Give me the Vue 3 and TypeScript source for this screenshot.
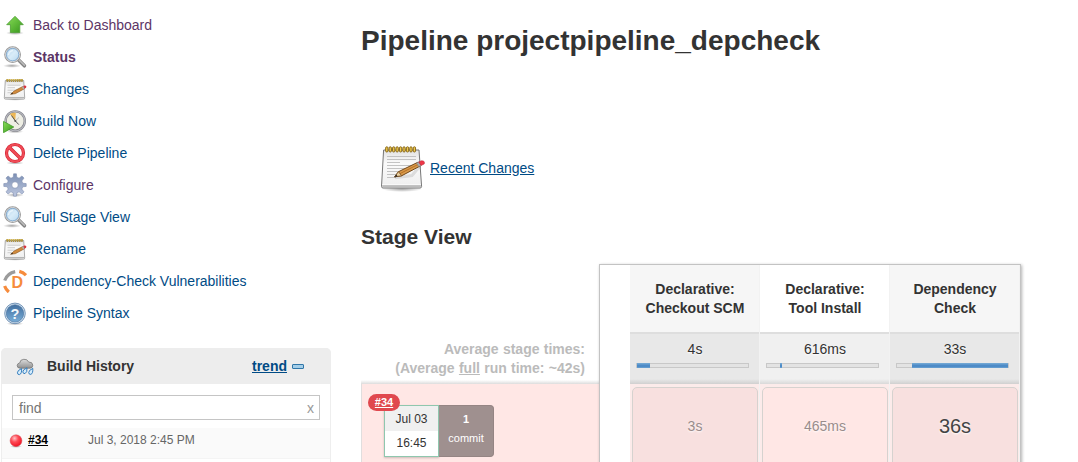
<script setup lang="ts">
interface Task {
  label: string
  icon: string
  visited?: boolean
  current?: boolean
}

interface Stage {
  name: string[]
  average: string
  offset: number
  share: number
  duration: string
  failed?: boolean
}

const tasks: Task[] = [
  { label: 'Back to Dashboard', icon: 'up', visited: true },
  { label: 'Status', icon: 'search', visited: true, current: true },
  { label: 'Changes', icon: 'notepad' },
  { label: 'Build Now', icon: 'clock' },
  { label: 'Delete Pipeline', icon: 'forbidden' },
  { label: 'Configure', icon: 'gear', visited: true },
  { label: 'Full Stage View', icon: 'search' },
  { label: 'Rename', icon: 'notepad' },
  { label: 'Dependency-Check Vulnerabilities', icon: 'depcheck' },
  { label: 'Pipeline Syntax', icon: 'help' },
]

const stages: Stage[] = [
  { name: ['Declarative:', 'Checkout SCM'], average: '4s', offset: 0, share: 11.5, duration: '3s' },
  { name: ['Declarative:', 'Tool Install'], average: '616ms', offset: 11.5, share: 1.8, duration: '465ms' },
  { name: ['Dependency', 'Check'], average: '33s', offset: 13.3, share: 86.7, duration: '36s', failed: true },
]
</script>

<template>
  <div class="page">
    <svg class="defs" width="0" height="0" aria-hidden="true">
      <defs>
        <linearGradient id="g-green" x1="0" y1="0" x2="1" y2="1">
          <stop offset="0" stop-color="#8ade58" /><stop offset="1" stop-color="#36961c" />
        </linearGradient>
        <linearGradient id="g-lens" x1="0" y1="0" x2="1" y2="1">
          <stop offset="0" stop-color="#a9cdea" /><stop offset=".5" stop-color="#d9ecf8" /><stop offset="1" stop-color="#b2d5ee" />
        </linearGradient>
        <linearGradient id="g-paper" x1="0" y1="0" x2="0" y2="1">
          <stop offset="0" stop-color="#e2e2e2" /><stop offset=".35" stop-color="#fafafa" /><stop offset="1" stop-color="#eeeeee" />
        </linearGradient>
        <linearGradient id="g-gear" x1="0" y1="0" x2="0" y2="1">
          <stop offset="0" stop-color="#7c90b4" /><stop offset="1" stop-color="#bdc7df" />
        </linearGradient>
        <linearGradient id="g-help" x1="0" y1="0" x2="0" y2="1">
          <stop offset="0" stop-color="#426f9f" /><stop offset="1" stop-color="#79add7" />
        </linearGradient>
        <linearGradient id="g-cloud" x1="0" y1="0" x2="0" y2="1">
          <stop offset="0" stop-color="#dedede" /><stop offset="1" stop-color="#8f8f8f" />
        </linearGradient>
        <radialGradient id="g-ball" cx=".38" cy=".3" r=".7">
          <stop offset="0" stop-color="#ffc3c6" /><stop offset=".45" stop-color="#ff4b56" /><stop offset="1" stop-color="#ef1525" />
        </radialGradient>
        <radialGradient id="g-shadow">
          <stop offset="0" stop-color="#000" stop-opacity=".35" /><stop offset="1" stop-color="#000" stop-opacity="0" />
        </radialGradient>
      </defs>
      <symbol id="up" viewBox="0 0 24 24">
        <ellipse cx="12" cy="20" rx="9" ry="2" fill="url(#g-shadow)" />
        <path d="M12 3.3 L20.3 11.7 H16.8 V19.6 H7.4 V11.7 H3.7 Z" fill="url(#g-green)" stroke="#4a9c30" stroke-width=".8" stroke-linejoin="round" />
      </symbol>
      <symbol id="search" viewBox="0 0 24 24">
        <ellipse cx="9" cy="20.8" rx="9" ry="2" fill="url(#g-shadow)" />
        <path d="M15.6 15 L21.4 20.8" stroke="#858585" stroke-width="3.6" stroke-linecap="round" />
        <path d="M16 14.9 L21.4 20.3" stroke="#bdbdbd" stroke-width="1.5" stroke-linecap="round" />
        <circle cx="9.6" cy="9.6" r="7.4" fill="url(#g-lens)" stroke="#999" stroke-width="2" />
        <circle cx="9.6" cy="9.6" r="7" fill="none" stroke="#e7e7e7" stroke-width=".9" />
        <circle cx="9.6" cy="9.6" r="6.2" fill="none" stroke="#78a5cf" stroke-width=".8" />
        <path d="M5.5 10 Q6 6 10 5.5" fill="none" stroke="#e8f4fb" stroke-width="1.3" />
      </symbol>
      <symbol id="notepad" viewBox="0 0 24 24">
        <ellipse cx="12" cy="22.4" rx="11" ry="1.3" fill="url(#g-shadow)" />
        <path d="M2.3 3.5 H20.7 L21.7 21 Q21.7 22 20.7 22 H2.3 Q1.3 22 1.3 21 Z" fill="url(#g-paper)" stroke="#999" stroke-width=".8" />
        <path d="M1.8 20.5 H21.2" stroke="#b5b5b5" stroke-width="1" />
        <path d="M4.5 8.2 H17.5 M4.5 10.7 H12 M4.5 13.2 H15 M4.5 15.7 H10" stroke="#c2c2c2" stroke-width=".8" />
        <path d="M3.5 3.3 H20" stroke="#8c7020" stroke-width="2.8" stroke-dasharray="1.5 .6" />
        <path d="M3.8 2.9 H20" stroke="#e5c64e" stroke-width="1.7" stroke-dasharray=".9 1.2" />
        <path d="M7.6 17.3 L11 14.1 L20.2 9.2 L21.6 11.7 L12.3 16.7 Z" fill="#d08a3c" stroke="#8c5a27" stroke-width=".6" />
        <path d="M7.6 17.3 L9.2 15.7 L10 17 Z" fill="#33281f" />
        <path d="M19.6 9.5 L21.4 8.5 Q24 8.3 23.1 10.8 L21 12 Z" fill="#d9333f" />
        <path d="M18.8 9.8 L20.2 9.1 L21.6 11.6 L20.2 12.4 Z" fill="#aaa" />
      </symbol>
      <symbol id="notepad-large" viewBox="0 0 48 48">
        <ellipse cx="24" cy="44" rx="20" ry="3" fill="url(#g-shadow)" />
        <path d="M5.6 5 H41 L43.6 41.5 Q43.5 43 42 43 H5 Q3.6 43 3.5 41.5 Z" fill="url(#g-paper)" stroke="#777" stroke-width="1" />
        <path d="M4.2 40 H42.9 V42.3 H4.2 Z" fill="#bcbcbc" />
        <path d="M4.2 39.6 H42.9" stroke="#f9f9f9" stroke-width="1" />
        <path d="M9 11.5 H38 M9 14.5 H38 M9 17.5 H22 M9 20.5 H36 M9 23.5 H32 M9 26.5 H27 M9 29.5 H24 M9 32.5 H18" stroke="#bcbcbc" stroke-width=".9" />
        <g fill="#f1cb4c" stroke="#806015" stroke-width=".9">
          <rect v-for="n in 9" :key="n" :x="4.2 + n * 3.45" y="1.8" width="2.3" height="5.2" rx="1.1" />
        </g>
        <path d="M17 32.7 L34 30.5 L42 21" fill="none" stroke="#000" stroke-opacity=".1" stroke-width="3" />
        <path d="M16.6 31.8 L20.5 26.7 L40 17.2 L42.5 20.8 L23.6 30.8 Z" fill="#d99a4b" stroke="#714618" stroke-width="1" stroke-linejoin="round" />
        <path d="M21.8 28.7 L41 19" stroke="#b77024" stroke-width="1" />
        <path d="M20.5 26.7 L23.6 30.8 L16.6 31.8 Z" fill="#ead0a0" stroke="#714618" stroke-width=".7" />
        <path d="M16.6 31.8 L18.3 29.6 L19.6 31.4 Z" fill="#222" />
        <path d="M38.4 18 L41 16.8 L43.3 20.4 L40.9 21.8 Z" fill="#aaa" stroke="#777" stroke-width=".4" />
        <path d="M40.7 16.9 L43.5 15.7 Q47.3 15.7 46.2 19 L43 20.5 Z" fill="#ed3648" stroke="#b71c2b" stroke-width=".5" />
      </symbol>
      <symbol id="clock" viewBox="0 0 24 24">
        <ellipse cx="12" cy="22.8" rx="9" ry="1.2" fill="url(#g-shadow)" />
        <circle cx="12.2" cy="12" r="9.6" fill="#eeeee4" stroke="#85868d" stroke-width="2.4" />
        <circle cx="12.2" cy="12" r="9.7" fill="none" stroke="#b9bac1" stroke-width="1.1" />
        <path d="M12.2 12 L7 5 Q10 3.2 12.8 4 Z" fill="#edb856" />
        <path d="M8.5 6.5 L12.4 12 L15.8 15.6" fill="none" stroke="#555" stroke-width="1" />
        <path d="M12.3 12 L16 8.5" stroke="#aaa" stroke-width=".7" />
        <circle cx="12.3" cy="12" r="1" fill="#555" />
        <path d="M.5 12.4 L10.8 18 L.5 23.7 Z" fill="url(#g-green)" stroke="#37961d" stroke-width=".7" />
      </symbol>
      <symbol id="forbidden" viewBox="0 0 24 24">
        <ellipse cx="12" cy="22" rx="9" ry="1.6" fill="url(#g-shadow)" />
        <circle cx="12" cy="12" r="8.5" fill="#fff" fill-opacity=".8" stroke="#d42131" stroke-width="3.2" />
        <path d="M6.2 6.2 L17.8 17.8" stroke="#d42131" stroke-width="3.4" />
        <circle cx="12" cy="12" r="8.5" fill="none" stroke="#f04d57" stroke-width="1.9" />
        <path d="M6.2 6.2 L17.8 17.8" stroke="#f04d57" stroke-width="2.1" />
      </symbol>
      <symbol id="gear" viewBox="0 0 24 24">
        <ellipse cx="12" cy="22" rx="9" ry="2" fill="url(#g-shadow)" />
        <path d="M10.2 4.3 L10.6 .8 H13.4 L13.8 4.3 L16.1 5.2 L18.9 3 L21 5.1 L18.8 7.9 L19.7 10.2 L23.2 10.6 V13.4 L19.7 13.8 L18.8 16.1 L21 18.9 L18.9 21 L16.1 18.8 L13.8 19.7 L13.4 23.2 H10.6 L10.2 19.7 L7.9 18.8 L5.1 21 L3 18.9 L5.2 16.1 L4.3 13.8 L.8 13.4 V10.6 L4.3 10.2 L5.2 7.9 L3 5.1 L5.1 3 L7.9 5.2 Z" fill="url(#g-gear)" stroke="#7f8fb0" stroke-width=".6" />
        <circle cx="12" cy="12" r="3.3" fill="#fff" stroke="#7f8fb0" stroke-width=".7" />
      </symbol>
      <symbol id="weather" viewBox="0 0 18 18">
        <path d="M4 10.2 Q1 10 1.2 7.3 Q1.5 5.2 3.7 5 Q4 1.5 7.8 1.3 Q11.4 .9 12.6 4 Q16.5 3.8 16.8 7.2 Q16.8 10 14 10.2 Z" fill="url(#g-cloud)" stroke="#777" stroke-width=".8" />
        <g fill="#d5ecfb" stroke="#2473b8" stroke-width=".9">
          <path d="M5.6 10.6 Q1.3 12.3 1.4 14.8 Q1.7 16.9 3.5 16.6 Q5.9 15.8 5.6 10.6 Z" />
          <path d="M11 9.8 Q6.7 11.6 6.8 13.9 Q7.1 15.9 9 15.6 Q11.4 14.6 11 9.8 Z" />
          <path d="M16.8 10.4 Q12.6 12.3 12.7 14.6 Q13 16.7 14.8 16.4 Q17.1 15.7 16.8 10.4 Z" />
        </g>
      </symbol>
    </svg>

    <aside class="sidebar">
      <nav class="tasks">
        <a v-for="task in tasks" :key="task.label" class="task" :class="{ visited: task.visited, current: task.current }">
          <svg v-if="task.icon === 'depcheck'" class="task-icon" viewBox="0 0 24 24">
            <g fill="none" stroke-width="3.2">
              <path d="M1.7 11.5 A14 14 0 0 1 12.2 2.6" stroke="#9b9b9b" />
              <path d="M16.3 2.4 A14 14 0 0 1 23 6.2" stroke="#f68b3c" />
              <path d="M1.6 17 A14 14 0 0 0 5.8 23" stroke="#f68b3c" />
            </g>
            <text x="8.4" y="19.4" font-size="16" font-weight="700" fill="#f68b3c">D</text>
          </svg>
          <svg v-else-if="task.icon === 'help'" class="task-icon" viewBox="0 0 24 24">
            <ellipse cx="12" cy="22.8" rx="9" ry="1.3" fill="url(#g-shadow)" />
            <circle cx="12" cy="12.4" r="10.3" fill="#d5e4f0" stroke="#6589b0" stroke-width=".9" />
            <circle cx="12" cy="12.4" r="8.7" fill="url(#g-help)" stroke="#446f9d" stroke-width=".6" />
            <text x="12" y="17.6" text-anchor="middle" font-size="14.5" font-weight="700" fill="#f3f8fc">?</text>
          </svg>
          <svg v-else class="task-icon"><use :href="`#${task.icon}`" /></svg>
          <span>{{ task.label }}</span>
        </a>
      </nav>
      <section class="history">
        <header class="history-head">
          <svg class="weather"><use href="#weather" /></svg>
          <span class="history-title">Build History</span>
          <a class="trend">trend</a>
          <i class="collapse"></i>
        </header>
        <div class="find"><span>find</span><span class="clear">x</span></div>
        <div class="build">
          <svg class="ball" viewBox="0 0 14 14">
            <ellipse cx="7" cy="12.5" rx="6" ry="1.4" fill="url(#g-shadow)" />
            <circle cx="7" cy="6.7" r="5.9" fill="url(#g-ball)" stroke="#d64650" stroke-width=".5" />
          </svg>
          <a class="build-number">#34</a>
          <span class="build-date">Jul 3, 2018 2:45 PM</span>
        </div>
      </section>
    </aside>

    <main class="main">
      <h1>Pipeline projectpipeline_depcheck</h1>
      <div class="recent">
        <svg class="recent-icon"><use href="#notepad-large" /></svg>
        <a>Recent Changes</a>
      </div>
      <h2>Stage View</h2>
      <div class="stage-view">
        <div class="runs">
          <div class="averages">
            Average stage times:<br />(Average <span class="full">full</span> run time: ~42s)
          </div>
          <div class="run">
            <div class="run-box">
              <div class="run-time"><span class="run-day">Jul 03</span><span class="run-hour">16:45</span></div>
              <div class="commits"><b>1</b><span>commit</span></div>
              <a class="badge">#34</a>
            </div>
          </div>
        </div>
        <div class="table">
          <div v-for="stage in stages" :key="stage.name.join(' ')" class="stage">
            <div class="stage-name"><span v-for="line in stage.name" :key="line">{{ line }}</span></div>
            <div class="stage-average">
              <span>{{ stage.average }}</span>
              <div class="track"><div class="bar" :style="{ marginLeft: stage.offset + '%', width: stage.share + '%' }"></div></div>
            </div>
            <div class="stage-run"><div class="cell" :class="{ failed: stage.failed }">{{ stage.duration }}</div></div>
          </div>
        </div>
      </div>
    </main>
  </div>
</template>

<style>
body {
  margin: 0;
  background: #fff;
}
</style>

<style scoped>
.page {
  display: flex;
  height: 462px;
  overflow: hidden;
  font-family: "Liberation Sans", Arial, sans-serif;
  font-size: 14px;
  color: #333;
}
.page * { box-sizing: border-box; }
.defs { position: absolute; }
.sidebar { width: 331px; flex: none; padding: 9px 0 0 1px; }
.tasks { height: 339px; padding-left: 2px; }
.task { display: flex; align-items: center; height: 32px; gap: 6px; color: #004b85; white-space: nowrap; }
.task.visited { color: #5c3566; }
.task.current { font-weight: 700; }
.task-icon { width: 24px; height: 24px; flex: none; }
.history { height: 130px; border: 1px solid #eee; border-radius: 5px 5px 0 0; }
.history-head { display: flex; align-items: center; height: 36px; margin: -1px -1px 0; padding: 0 0 0 15px; background: #ededed; border-radius: 5px 5px 0 0; font-weight: 700; }
.weather { width: 18px; height: 18px; margin-top: 2px; }
.history-title { margin-left: 13px; width: 205px; }
.trend { color: #004b85; text-decoration: underline; }
.collapse { width: 12px; height: 5px; margin: 1px 0 0 5px; border: 1px solid #3076a8; background: #a4cee8; border-radius: 1px; }
.find { display: flex; align-items: center; justify-content: space-between; width: 308px; height: 25px; margin: 11px 0 8px 10px; padding: 0 5px 0 6px; border: 1px solid #c5c5c5; color: #757575; }
.clear { color: #999; font-size: 14px; }
.build { display: flex; align-items: center; height: 31px; margin-top: 8px; padding: 0 0 6px 7px; background: #fafafa; border-bottom: 1px solid #f4f4f4; font-size: 12px; }
.ball { width: 14px; height: 14px; margin-top: 1px; }
.build-number { width: 60px; margin-left: 5px; color: #000; font-weight: 700; text-decoration: underline; }
.build-date { color: #666; }
.main { width: 661px; flex: none; margin-left: 30px; }
h1 { margin: 0; padding-top: 25px; font-size: 28px; line-height: 32px; white-space: nowrap; }
.recent { display: flex; align-items: center; height: 48px; margin: 87px 0 0 17px; gap: 4px; }
.recent-icon { width: 48px; height: 48px; margin-top: 2px; }
.recent a { color: #004b85; text-decoration: underline; }
h2 { margin: 33px 0 0; font-size: 21px; line-height: 24px; }
.stage-view { display: flex; height: 213px; margin-top: 15px; }
.runs { width: 238px; flex: none; }
.averages { height: 120px; padding: 76px 14px 0 0; background: linear-gradient(#fff 116px, #dcdcdc 120px); color: #bbb; font-weight: 700; line-height: 19px; text-align: right; white-space: nowrap; word-spacing: .4px; }
.full { text-decoration: underline; }
.run { height: 93px; padding: 21px 0 0 22px; background: #ffe7e5; border-left: 1px solid #e0dede; }
.run-box { position: relative; display: flex; width: 110px; height: 52px; font-size: 12px; }
.run-time { display: flex; flex-direction: column; width: 55px; border: 1px solid #8fc7ae; background: #fff; text-align: center; box-shadow: 0 1px 2px rgba(0, 0, 0, .2); }
.run-day { height: 25px; line-height: 26px; background: #f0f0f0; }
.run-hour { height: 25px; line-height: 25px; }
.commits { display: flex; flex-direction: column; width: 55px; padding-top: 4px; background: #9f908f; border: 1px solid #958584; border-left: 0; border-radius: 0 4px 4px 0; color: #fff; font-size: 11px; line-height: 19px; text-align: center; }
.badge { position: absolute; left: -16px; top: -11px; width: 32px; height: 17px; border-radius: 9px; background: #e0484e; color: #fff; font-size: 11px; font-weight: 700; line-height: 17px; text-align: center; text-decoration: underline; }
.table { display: flex; width: 422px; flex: none; height: 230px; padding-left: 30px; border: 1px solid #c3c3c3; background: #fff; box-shadow: 1px 1px 3px rgba(0, 0, 0, .3); }
.stage { width: 130px; flex: none; border-right: 1px solid #f2f2f2; }
.stage-name { display: flex; flex-direction: column; height: 69px; padding: 15px 0 0 1px; border-bottom: 2px solid #dedede; font-weight: 700; line-height: 19px; text-align: center; }
.stage:nth-child(odd) .stage-name { background: #f6f6f6; }
.stage-average { height: 50px; padding: 6px 10px 0 6px; background: linear-gradient(#f0f0f0 45px, #d9d9d9 50px); text-align: center; line-height: 19px; text-shadow: 0 1px 2px #fff; }
.stage-average span { display: block; margin-left: 5px; }
.stage:nth-child(odd) .stage-average { background: linear-gradient(#e8e8e8 45px, #d0d0d0 50px); }
.track { height: 5px; margin-top: 4px; border: 1px solid #c8c8c8; background: #e3e3e3; }
.bar { height: 5px; margin-top: -1px; background: linear-gradient(#78acd6, #4484c4 60%, #6ca3d1); }
.stage-run { height: 100px; padding: 3px 1px 0 2px; background: #fcebea; }
.cell { height: 100px; padding-top: 27px; border: 1px solid #d6d2cf; border-radius: 5px; background: #ffe7e5; color: #998c8b; line-height: 22px; text-align: center; text-shadow: 0 1px 2px #fff; }
.stage:nth-child(odd) .cell { background: #f8e0df; }
.cell.failed { color: #444; font-size: 20px; }
</style>
